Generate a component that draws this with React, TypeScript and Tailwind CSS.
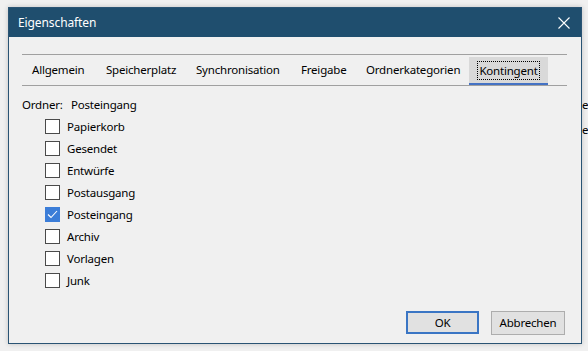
import React from "react";

const folders = [
  { name: "Papierkorb", checked: false },
  { name: "Gesendet", checked: false },
  { name: "Entwürfe", checked: false },
  { name: "Postausgang", checked: false },
  { name: "Posteingang", checked: true },
  { name: "Archiv", checked: false },
  { name: "Vorlagen", checked: false },
  { name: "Junk", checked: false },
];

const tabs = [
  { t: "Allgemein", w: "w-[74px]" },
  { t: "Speicherplatz", w: "w-[90px]" },
  { t: "Synchronisation", w: "w-[105px]" },
  { t: "Freigabe", w: "w-[65px]" },
  { t: "Ordnerkategorien", w: "w-[103px]" },
];

function Checkbox({ checked }: { checked: boolean }) {
  if (checked) {
    return (
      <div className="w-[15px] h-[15px] bg-[#3b7dd8] flex items-center justify-center">
        <svg width="11" height="9" viewBox="0 0 11 9">
          <path d="M1 4.5 L4 7.5 L10 1" fill="none" stroke="#ffffff" strokeWidth="1.1" />
        </svg>
      </div>
    );
  }
  return <div className="w-[15px] h-[15px] bg-white border border-[#4a4a4a]" />;
}

export default function App() {
  return (
    <div
      className="relative w-[588px] h-[351px] bg-[#f0f0f0] overflow-hidden pt-[7px] pl-[8px] text-[11.5px] tracking-[-0.2px] text-black"
      style={{ fontFamily: '"Noto Sans", "Open Sans", sans-serif' }}
    >
      <div className="absolute left-[582px] top-[96px] leading-[18px] flex flex-col gap-[7px]">
        <span>er</span>
        <span>er</span>
      </div>
      <div className="relative w-[574px] h-[337px] border border-[#2a5474] bg-[#f0f0f0] flex flex-col shadow-[0_0_5px_rgba(0,0,0,0.2)]">
        <div className="h-[29px] bg-[#1f4e6e] flex items-center justify-between pl-[9px] pr-[2px] shrink-0">
          <span className="text-white text-[12px] tracking-[-0.1px]">Eigenschaften</span>
          <div className="w-[30px] h-[29px] flex items-center justify-center">
            <svg width="12" height="12" viewBox="0 0 12 12">
              <path d="M0.5 0.5 L11.5 11.5 M11.5 0.5 L0.5 11.5" stroke="#ffffff" strokeWidth="1.1" />
            </svg>
          </div>
        </div>
        <div className="flex-1 flex flex-col px-[13px] pt-[17px]">
          <div className="h-[32px] border-t border-b border-[#a0a0a0] flex items-stretch mr-[1px] pl-[10px]">
            {tabs.map((t) => (
              <div key={t.t} className={`flex items-center ${t.w}`}>
                {t.t}
              </div>
            ))}
            <div className="w-[79px] mt-[2px] bg-[#d9d9d9] border-b-[2px] border-[#4472c4] flex items-center justify-center">
              <span className="border border-dotted border-black px-[1px] leading-[17px]">Kontingent</span>
            </div>
          </div>
          <div className="flex mt-[10px] leading-[18px]">
            <span className="w-[49px]">Ordner:</span>
            <span>Posteingang</span>
          </div>
          <div className="flex flex-col gap-[7px] mt-[5px] pl-[23px]">
            {folders.map((f) => (
              <div key={f.name} className="flex items-center gap-[7px] h-[15px]">
                <Checkbox checked={f.checked} />
                <span>{f.name}</span>
              </div>
            ))}
          </div>
          <div className="flex justify-end gap-[12px] mt-[23px] mr-[3px]">
            <button className="w-[73px] h-[23px] bg-[#e1e1e1] border-2 border-[#3a75c4]">OK</button>
            <button className="w-[74px] h-[24px] bg-[#e1e1e1] border border-[#adadad]">Abbrechen</button>
          </div>
        </div>
      </div>
    </div>
  );
}
